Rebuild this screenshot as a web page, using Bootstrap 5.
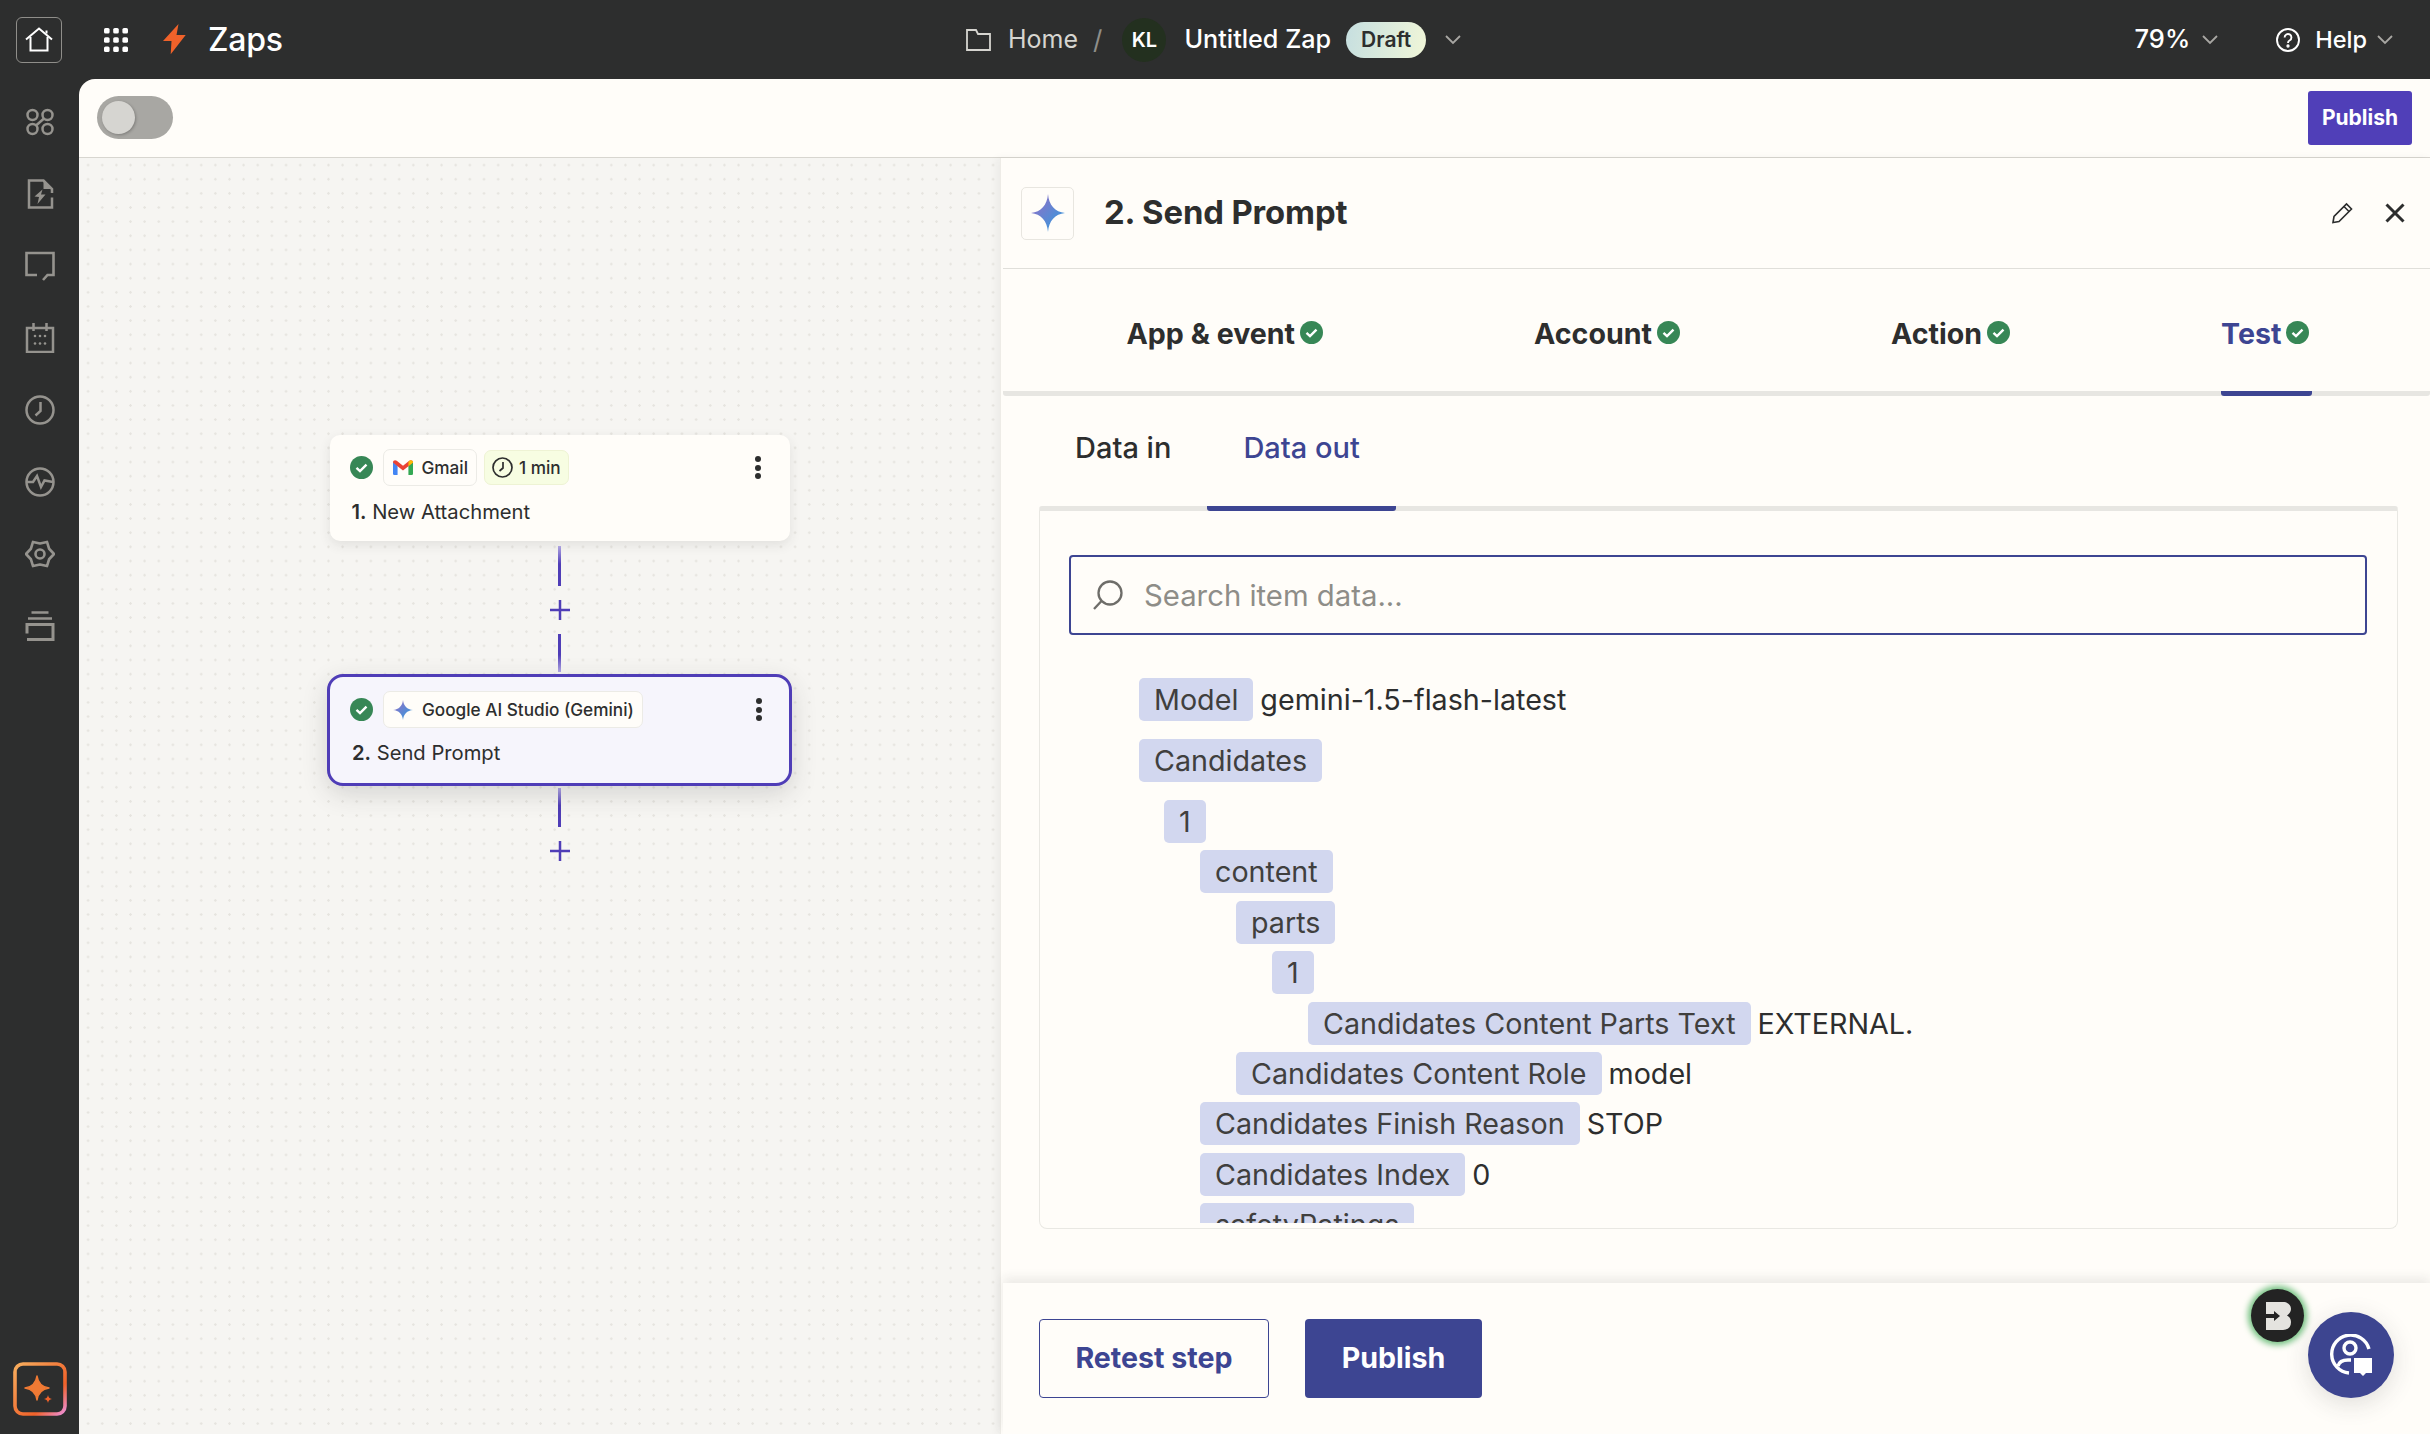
<!doctype html>
<html lang="en">
<head>
<meta charset="utf-8">
<title>Zaps</title>
<link href="https://cdn.jsdelivr.net/npm/bootstrap@5.3.0/dist/css/bootstrap.min.css" rel="stylesheet">
<style>
html,body{height:100%;overflow:hidden}
body{font-family:Inter,"Liberation Sans",sans-serif;background:#2d2e2e;color:#2d2e2e;width:2430px;height:1434px}
.topbar{height:79px;color:#fff}
.hdr-left{width:966px;padding-left:16px}
.homebox{width:46px;height:46px;border:1px solid #8f8e8a;border-radius:6px;margin-right:42px}
.boltmark{margin-left:35px}
.appname{font-size:32px;font-weight:500;margin-left:22px;line-height:1;letter-spacing:-.2px}
.crumb{font-size:25px;color:#d6d5d0;margin-left:17px}
.slash{font-size:26px;color:#8f8e8a;margin:0 20px 0 15px}
.kl{width:44px;height:44px;border-radius:50%;background:#23301f;font-size:20px;font-weight:600;color:#fff}
.zapname{font-size:25.200px;font-weight:550;margin-left:18px}
.draft{background:linear-gradient(100deg,#c6dfe0,#f0f6d8);color:#2d2e2e;font-size:21px;font-weight:600;height:36px;width:80px;margin-left:15px;padding:0;display:flex;align-items:center;justify-content:center}
.chev{margin-left:19px}
.zoomtxt{font-size:25.500px;font-weight:500}
.chev2{margin-left:12px}
.helpring{margin-left:58px}
.helptxt{font-size:23.500px;font-weight:500;margin-left:15px}
.chev3{margin:0 37px 0 10px}
.mainrow{height:1355px}
.rail{width:79px;padding-top:28px;gap:42px}
.rail svg{display:block}
.starbtn{margin-top:auto;margin-bottom:18px}
.workarea{background:#fffdf9;border-top-left-radius:16px;overflow:hidden;min-width:0}
.toolrow{height:79px;border-bottom:1.5px solid #d8d6d0;padding:0 18px 1px 18px}
.switchy{width:76px;height:43px;border-radius:22px;background:#a8a7a3;padding:5px}
.knob{width:33px;height:33px;border-radius:50%;background:#d6d5d1;box-shadow:1px 1px 3px rgba(0,0,0,.25)}
.btn.pub-small{background:#503fb8;color:#fff;font-size:21px;font-weight:700;width:104px;height:54px;border-radius:3px;border:0;padding:0;line-height:54px}
.lowerrow{min-height:0}
.canvas{width:921px;background-color:#f6f5f2;background-image:radial-gradient(circle,#e6e4df 1px,transparent 1.4px);background-size:14.15px 14.15px;background-position:2px 0;padding-top:277px;padding-left:248px}
.flow{width:465px}
.card.node{background:#fffdf9;border:0;border-radius:10px;box-shadow:0 4px 12px rgba(45,46,46,.1);width:460px;height:106px;padding:14px 20px 0 20px}
.card.node.sel{background:#f6f5fc;border:3px solid #4f3db7;width:465px;height:112px;border-radius:16px;box-shadow:0 8px 26px rgba(45,46,46,.16);padding:14px 20px 0 20px;margin-top:2px}
.okdot{flex:none}
.chip{height:37px;background:#fffdf9;border:1px solid #ecebe6;border-radius:7px;font-size:17.200px;font-weight:550;padding:0 8px 0 9px;gap:9px;margin-left:10px;color:#2d2e2e}
.chip.timer{height:35px;background:#f7fde2;border-color:#eef3d4;margin-left:7px;gap:6px;padding:0 7px}
.nodetitle{font-size:20.200px;margin:13px 0 0 2px;line-height:26px;color:#2d2e2e}
.nodetitle b{font-weight:600}
.sel .nodetitle{margin-top:12px}
.kebab{margin-left:auto;width:6px;gap:2.5px;margin-right:9px}
.kebab i{display:block;width:6px;height:6px;border-radius:50%;background:#2d2e2e}
.sel .kebab{margin-right:7px}
.wire{width:3px;background:linear-gradient(#b3a9e6,#4f3db7 45%)}
.wire.rev{background:linear-gradient(#4f3db7 55%,#b3a9e6)}
.w40{height:40px;margin-top:5px}
.w38{height:38px}
.w39{height:39px;margin-top:2px}
.plusicon{margin:14px 0}
.sidepanel{width:1430px;background:#fffdf9;border-left:1px solid #eeece7;box-shadow:-3px 0 8px rgba(45,46,46,.05);padding-left:2px;height:1276px;position:relative}
.panelhead{height:111px;border-bottom:1.5px solid #e0dfda;padding:0 25px 0 18px}
.iconbox{width:53px;height:53px;border:1px solid #e8e6e0;border-radius:5px}
.paneltitle{font-size:32.800px;font-weight:650;margin:0 0 0 30px;letter-spacing:-.1px}
.closex{margin-left:32px}
.stepnav{height:127px;border-bottom:5px solid #e7e6e2;padding:0 15px 0 18px;border-radius:3px}
.stepitem{height:127px;margin-bottom:-5px;padding-top:48px;font-size:28.600px;font-weight:650;gap:5px;color:#2d2e2e;border-bottom:5px solid transparent;border-radius:0 0 3px 3px}
.stepitem span{line-height:34px}
.stepitem svg{margin-top:4px}
.stepitem.on{color:#3d4592;border-bottom-color:#3d4592;padding-right:3px;margin-right:-3px}
.subnav{margin:0 32px 0 36px;height:115px}
.subitem{padding:35px 36px 0;font-size:29px;font-weight:550;color:#2d2e2e;line-height:34px;height:115px;margin-right:0}
.subitem.on{color:#3d4592;border-bottom:5px solid #3d4592;border-radius:0 0 3px 3px}
.databox{margin:-5px 32px 0 36px;height:723px;border:1px solid #e9e8e3;border-top:5px solid #e7e6e2;border-radius:3px 3px 8px 8px;padding:44px 30px 0 29px}
.searchbox{height:80px;border:2px solid #3d4592;border-radius:4px;padding:0 12px 0 21px;gap:20px}
.searchbox .form-control{border:0;background:transparent;padding:2px 0 0;font-size:29.300px;box-shadow:none;color:#2d2e2e}
.searchbox .form-control::placeholder{color:#8e8d88;opacity:1}
.treewrap{height:545px;overflow:hidden;margin-top:43px;margin-left:70px}
.trow{margin-top:7.4px;height:43px;gap:7px;font-size:28.700px;color:#2d2e2e;white-space:nowrap}
.trow.far{margin-top:18px}
.trow.first{margin-top:0}
.tagy{background:#d2d7ef;color:#403f3e;border-radius:5px;height:43px;line-height:43px;padding:0 15px;display:block}
.lv1{margin-left:25px}.lv2{margin-left:61px}.lv3{margin-left:97px}.lv4{margin-left:133px}.lv5{margin-left:169px}
.footbar{position:absolute;left:2px;right:0;bottom:0;height:151px;background:#fffdf9;box-shadow:0 -5px 10px rgba(45,46,46,.09);padding:36px 0 0 36px;gap:36px}
.btn.bt-line,.btn.bt-solid{height:79px;border-radius:4px;font-size:28.600px;font-weight:650;padding:0;display:flex;align-items:center;justify-content:center}
.btn.bt-line{width:230px;border:1.5px solid #3d4592;color:#3d4592;background:transparent}
.btn.bt-solid{width:177px;border:0;color:#fff;background:#3d4592}
.blackbub{position:absolute;left:1250px;top:1131px;width:53px;height:53px;border-radius:50%;background:#232323;box-shadow:0 0 6px 3px #6fbf7d}
.helpbub{position:absolute;left:1307px;top:1154px;width:86px;height:86px;border-radius:50%;background:#3d4590;box-shadow:0 6px 24px rgba(45,46,46,.15)}
</style>
</head>
<body>
<div class="topbar d-flex align-items-center">
  <div class="hdr-left d-flex align-items-center flex-shrink-0">
    <div class="homebox d-flex align-items-center justify-content-center">
      <svg width="30" height="30" viewBox="0 0 30 30" fill="none" stroke="#fff" stroke-width="2"><path d="M2 14.500 15 3.500l13 11"/><path d="M6.500 12v13.500h17V12"/><path d="M22.500 5.500v3"/></svg>
    </div>
    <svg width="24" height="24" viewBox="0 0 24 24" fill="#fff"><rect x="0" y="0" width="5.600" height="5.600" rx="1.600"/><rect x="9.200" y="0" width="5.600" height="5.600" rx="1.600"/><rect x="18.400" y="0" width="5.600" height="5.600" rx="1.600"/><rect x="0" y="9.200" width="5.600" height="5.600" rx="1.600"/><rect x="9.200" y="9.200" width="5.600" height="5.600" rx="1.600"/><rect x="18.400" y="9.200" width="5.600" height="5.600" rx="1.600"/><rect x="0" y="18.400" width="5.600" height="5.600" rx="1.600"/><rect x="9.200" y="18.400" width="5.600" height="5.600" rx="1.600"/><rect x="18.400" y="18.400" width="5.600" height="5.600" rx="1.600"/></svg>
    <svg class="boltmark" width="23" height="31" viewBox="0 0 23 31" fill="#f0622a"><polygon points="15.500,0 0,17 8.500,17 7.700,30.300 22.700,11 13.500,11"/></svg>
    <span class="appname">Zaps</span>
  </div>
  <svg width="25" height="22" viewBox="0 0 25 22" fill="none" stroke="#d6d5d0" stroke-width="1.800"><path d="M1 21V1h9l2 4h12v16z"/></svg>
  <span class="crumb">Home</span>
  <span class="slash">/</span>
  <span class="kl d-flex align-items-center justify-content-center">KL</span>
  <span class="zapname">Untitled Zap</span>
  <span class="badge rounded-pill draft">Draft</span>
  <svg class="chev" width="16" height="10" viewBox="0 0 16 10" fill="none" stroke="#a8a7a3" stroke-width="1.800"><path d="M1 1l7 7 7-7"/></svg>
  <span class="zoomtxt ms-auto">79%</span>
  <svg class="chev2" width="16" height="10" viewBox="0 0 16 10" fill="none" stroke="#a8a7a3" stroke-width="1.800"><path d="M1 1l7 7 7-7"/></svg>
  <svg class="helpring" width="24" height="24" viewBox="0 0 24 24" fill="none" stroke="#fff" stroke-width="1.900"><circle cx="12" cy="12" r="11"/><path d="M8.600 9.400a3.400 3.400 0 1 1 5.200 2.900c-1.200.7-1.800 1.300-1.800 2.700"/><circle cx="12" cy="18" r=".7" fill="#fff"/></svg>
  <span class="helptxt">Help</span>
  <svg class="chev3" width="16" height="10" viewBox="0 0 16 10" fill="none" stroke="#a8a7a3" stroke-width="1.800"><path d="M1 1l7 7 7-7"/></svg>
</div>

<div class="d-flex mainrow">
  <div class="rail d-flex flex-column align-items-center flex-shrink-0">
    <svg width="30" height="30" viewBox="0 0 30 30" fill="none" stroke="#95938e" stroke-width="2.500"><circle cx="7.500" cy="8" r="5"/><circle cx="22.500" cy="8" r="5"/><circle cx="7.500" cy="22" r="5"/><circle cx="22.500" cy="22" r="5"/><path d="M11 18.500 19 11.500"/></svg>
    <svg width="30" height="30" viewBox="0 0 30 30" fill="none" stroke="#95938e" stroke-width="2.500"><path d="M27 18.500V28.500H4V1.500h14.500L27 10v4"/><path d="M18.500 1.500 27 10h-8.500z" fill="#95938e" stroke="none"/><polygon points="17.500,10.500 9.500,17.500 14,18 12.500,25 20.500,15.500 16,15.500" fill="#95938e" stroke="none"/></svg>
    <svg width="30" height="30" viewBox="0 0 30 30" fill="none" stroke="#95938e" stroke-width="2.600"><path d="M12 24H1.500V2h27v22h-6l-4.500 5"/></svg>
    <svg width="30" height="30" viewBox="0 0 30 30" fill="none" stroke="#95938e" stroke-width="2.500"><path d="M2 5h26v24H2z"/><path d="M8.500 0v8M21.500 0v8"/><g fill="#95938e" stroke="none"><circle cx="10" cy="13" r="1.300"/><circle cx="15" cy="13" r="1.300"/><circle cx="20" cy="13" r="1.300"/><circle cx="10" cy="20.500" r="1.300"/><circle cx="15" cy="20.500" r="1.300"/><circle cx="20" cy="20.500" r="1.300"/></g></svg>
    <svg width="30" height="30" viewBox="0 0 30 30" fill="none" stroke="#95938e" stroke-width="2.500"><circle cx="15" cy="15" r="13.500"/><path d="M15.500 7v9l-5 4.500"/></svg>
    <svg width="30" height="30" viewBox="0 0 30 30" fill="none" stroke="#95938e" stroke-width="2.500"><circle cx="15" cy="15" r="13.500"/><path d="M2 15h6l4-6 4 11 3.500-6.500 8.500 1.500"/></svg>
    <svg width="30" height="30" viewBox="0 0 30 30" fill="none" stroke="#95938e" stroke-width="2.600" stroke-linejoin="round"><polygon points="29,15 24.100,20.250 22,27.100 15,25.500 8,27.100 5.900,20.250 1,15 5.900,9.750 8,2.900 15,4.500 22,2.900 24.100,9.750"/><circle cx="15" cy="15" r="4.500"/></svg>
    <svg width="30" height="30" viewBox="0 0 30 30" fill="none" stroke="#95938e" stroke-width="2.600"><path d="M6.500 1.500h17M3 7.500h24"/><path d="M2 28.500h26V13.500H2v9" stroke-width="3"/></svg>
    <svg class="starbtn" width="54" height="54" viewBox="0 0 54 54" fill="none"><defs><linearGradient id="gb" x1="0" y1="0" x2="1" y2="1"><stop offset="0" stop-color="#f7ae5e"/><stop offset=".7" stop-color="#f0622a"/><stop offset="1" stop-color="#ec8fd8"/></linearGradient></defs><rect x="2" y="2" width="50" height="50" rx="8" stroke="url(#gb)" stroke-width="3.600"/><path d="M24 14c1 7 5 11 12 12-7 1-11 5-12 12-1-7-5-11-12-12 7-1 11-5 12-12z" fill="#f07a34" stroke="#f07a34" stroke-width="1.500" stroke-linejoin="round"/><path d="M35 33c.4 2.500 1.500 3.600 4 4-2.500.4-3.600 1.500-4 4-.4-2.500-1.500-3.600-4-4 2.500-.4 3.600-1.500 4-4z" fill="#f0622a"/></svg>
  </div>

  <div class="workarea flex-grow-1 d-flex flex-column">
    <div class="toolrow d-flex align-items-center justify-content-between flex-shrink-0">
      <div class="switchy"><div class="knob"></div></div>
      <button class="btn pub-small" type="button">Publish</button>
    </div>
    <div class="d-flex flex-grow-1 lowerrow">
      <div class="canvas flex-shrink-0">
        <div class="flow d-flex flex-column align-items-center">
          <div class="card node">
            <div class="d-flex align-items-center">
              <svg class="okdot" width="23" height="23" viewBox="0 0 23 23"><circle cx="11.500" cy="11.500" r="11.500" fill="#378756"/><path d="M6.500 11.800l3.500 3.300 6.500-6.500" fill="none" stroke="#fff" stroke-width="2.400"/></svg>
              <span class="chip d-flex align-items-center"><svg width="20" height="15" viewBox="0 0 24 18"><path d="M0 2v14.500A1.500 1.500 0 0 0 1.500 18H5.500V7z" fill="#4285f4"/><path d="M24 2v14.500a1.500 1.500 0 0 1-1.500 1.500H18.500V7z" fill="#34a853"/><path d="M0 3C0 .5 2.500-.6 4.500 1L12 7 19.500 1C21.500-.6 24 .5 24 3L18.500 7.500 12 12.500 5.500 7.500z" fill="#ea4335"/><path d="M18.500 2.800 19.500 1C21.500-.6 24 .5 24 3l-5.500 4.500z" fill="#fbbc04"/></svg>Gmail</span>
              <span class="chip timer d-flex align-items-center"><svg width="21" height="21" viewBox="0 0 21 21" fill="none" stroke="#2d2e2e" stroke-width="1.700"><circle cx="10.500" cy="10.500" r="9.500"/><path d="M11 5v6l-3.500 3"/></svg>1 min</span>
              <span class="kebab d-flex flex-column"><i></i><i></i><i></i></span>
            </div>
            <p class="nodetitle"><b>1.</b> New Attachment</p>
          </div>
          <div class="wire w40"></div>
          <svg class="plusicon" width="20" height="20" viewBox="0 0 20 20" stroke="#4f3db7" stroke-width="2.500"><path d="M10 0v20M0 10h20"/></svg>
          <div class="wire rev w38"></div>
          <div class="card node sel">
            <div class="d-flex align-items-center">
              <svg class="okdot" width="23" height="23" viewBox="0 0 23 23"><circle cx="11.500" cy="11.500" r="11.500" fill="#378756"/><path d="M6.500 11.800l3.500 3.300 6.500-6.500" fill="none" stroke="#fff" stroke-width="2.400"/></svg>
              <span class="chip d-flex align-items-center"><svg width="20" height="20" viewBox="0 0 24 24"><defs><linearGradient id="s1" x1="0" y1="0" x2="1" y2="1"><stop offset="0" stop-color="#9b6bc4"/><stop offset="1" stop-color="#2a9fe0"/></linearGradient></defs><path d="M12 0C12.600 7 17 11.400 24 12 17 12.600 12.600 17 12 24 11.400 17 7 12.600 0 12 7 11.400 11.400 7 12 0z" fill="url(#s1)"/></svg>Google AI Studio (Gemini)</span>
              <span class="kebab d-flex flex-column"><i></i><i></i><i></i></span>
            </div>
            <p class="nodetitle"><b>2.</b> Send Prompt</p>
          </div>
          <div class="wire w39"></div>
          <svg class="plusicon" width="20" height="20" viewBox="0 0 20 20" stroke="#4f3db7" stroke-width="2.500"><path d="M10 0v20M0 10h20"/></svg>
        </div>
      </div>

      <div class="sidepanel flex-shrink-0">
        <div class="panelhead d-flex align-items-center">
          <div class="iconbox d-flex align-items-center justify-content-center"><svg width="34" height="38" viewBox="0 0 24 24" preserveAspectRatio="none"><defs><linearGradient id="s2" x1="0" y1="0" x2="1" y2="1"><stop offset="0" stop-color="#9b6bc4"/><stop offset="1" stop-color="#2a9fe0"/></linearGradient></defs><path d="M12 0C12.600 7 17 11.400 24 12 17 12.600 12.600 17 12 24 11.400 17 7 12.600 0 12 7 11.400 11.400 7 12 0z" fill="url(#s2)"/></svg></div>
          <h2 class="paneltitle">2. Send Prompt</h2>
          <svg class="ms-auto" width="21" height="22" viewBox="0 0 21 22" fill="none" stroke="#2d2e2e" stroke-width="1.600"><path d="M1 20.500l1-6L14.500 2l5 5L7 19.500z"/><path d="M12 4.500l5 5"/></svg>
          <svg class="closex" width="20" height="20" viewBox="0 0 20 20" fill="none" stroke="#2d2e2e" stroke-width="3"><path d="M1.500 1.500l17 17M18.500 1.500l-17 17"/></svg>
        </div>
        <nav class="nav stepnav justify-content-around flex-nowrap">
          <div class="stepitem d-flex align-items-start"><span>App &amp; event</span><svg width="23" height="23" viewBox="0 0 23 23"><circle cx="11.500" cy="11.500" r="11.500" fill="#378756"/><path d="M6.500 11.800l3.500 3.300 6.500-6.500" fill="none" stroke="#fff" stroke-width="2.400"/></svg></div>
          <div class="stepitem d-flex align-items-start"><span>Account</span><svg width="23" height="23" viewBox="0 0 23 23"><circle cx="11.500" cy="11.500" r="11.500" fill="#378756"/><path d="M6.500 11.800l3.500 3.300 6.500-6.500" fill="none" stroke="#fff" stroke-width="2.400"/></svg></div>
          <div class="stepitem d-flex align-items-start"><span>Action</span><svg width="23" height="23" viewBox="0 0 23 23"><circle cx="11.500" cy="11.500" r="11.500" fill="#378756"/><path d="M6.500 11.800l3.500 3.300 6.500-6.500" fill="none" stroke="#fff" stroke-width="2.400"/></svg></div>
          <div class="stepitem on d-flex align-items-start"><span>Test</span><svg width="23" height="23" viewBox="0 0 23 23"><circle cx="11.500" cy="11.500" r="11.500" fill="#378756"/><path d="M6.500 11.800l3.500 3.300 6.500-6.500" fill="none" stroke="#fff" stroke-width="2.400"/></svg></div>
        </nav>
        <nav class="nav subnav flex-nowrap">
          <div class="subitem">Data in</div>
          <div class="subitem on">Data out</div>
        </nav>
        <div class="databox">
          <div class="searchbox d-flex align-items-center">
            <svg class="flex-shrink-0" width="32" height="32" viewBox="0 0 32 32" fill="none" stroke="#6e6d69" stroke-width="2.300"><circle cx="18" cy="14" r="11.500"/><path d="M9.500 22l-7.500 8"/></svg>
            <input class="form-control" type="text" placeholder="Search item data...">
          </div>
          <div class="treewrap">
            <div class="trow first d-flex"><span class="tagy">Model</span><span>gemini-1.5-flash-latest</span></div>
            <div class="trow far d-flex"><span class="tagy">Candidates</span></div>
            <div class="trow far d-flex lv1"><span class="tagy">1</span></div>
            <div class="trow d-flex lv2"><span class="tagy">content</span></div>
            <div class="trow d-flex lv3"><span class="tagy">parts</span></div>
            <div class="trow d-flex lv4"><span class="tagy">1</span></div>
            <div class="trow d-flex lv5"><span class="tagy">Candidates Content Parts Text</span><span>EXTERNAL.</span></div>
            <div class="trow d-flex lv3"><span class="tagy">Candidates Content Role</span><span>model</span></div>
            <div class="trow d-flex lv2"><span class="tagy">Candidates Finish Reason</span><span>STOP</span></div>
            <div class="trow d-flex lv2"><span class="tagy">Candidates Index</span><span>0</span></div>
            <div class="trow d-flex lv2"><span class="tagy">safetyRatings</span></div>
          </div>
        </div>
        <div class="footbar d-flex">
          <button class="btn bt-line" type="button">Retest step</button>
          <button class="btn bt-solid" type="button">Publish</button>
        </div>
        <div class="blackbub d-flex align-items-center justify-content-center">
          <svg width="26" height="28" viewBox="0 0 26 28"><path d="M1 0h17c5 0 8 3 8 7 0 3-2 5-4 6.500 2 1 4 3 4 6.500 0 5-3 8-8 8H1V16h8v3l6-5-6-5v3H1z" fill="#e4e3df"/></svg>
        </div>
        <div class="helpbub d-flex align-items-center justify-content-center">
          <svg width="44" height="42" viewBox="0 0 44 42" fill="none" stroke="#fff" stroke-width="3.400"><path d="M40 15A19 19 0 1 0 20 39"/><circle cx="21" cy="14" r="6"/><path d="M9 32c1-4 5-6 10-6h3"/><path d="M25 24h18v15h-6l-3 3-3-3h-6z" fill="#fff" stroke="none"/></svg>
        </div>
      </div>
    </div>
  </div>
</div>
<script src="https://cdn.jsdelivr.net/npm/bootstrap@5.3.0/dist/js/bootstrap.bundle.min.js"></script>
</body>
</html>
